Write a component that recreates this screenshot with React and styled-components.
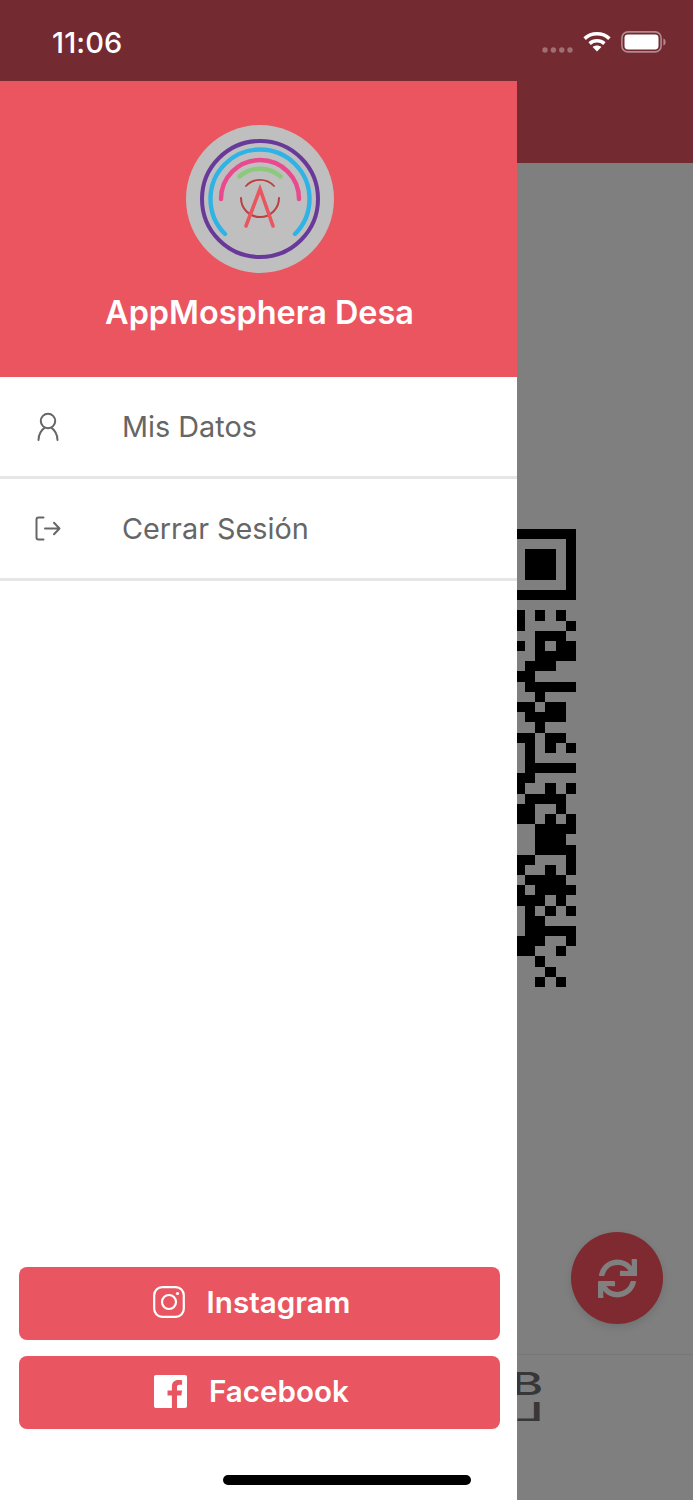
import React from 'react';
import styled, { createGlobalStyle } from 'styled-components';
import { FaSync } from 'react-icons/fa';

const GlobalStyle = createGlobalStyle`
  html, body {
    margin: 0;
    padding: 0;
    background: #fff;
    font-family: Inter, "Liberation Sans", sans-serif;
  }
`

const Screen = styled.div`
  position: relative;
  width: 693px;
  height: 1500px;
  overflow: hidden;
  background: #fff;
`

const PageHeader = styled.div`
  height: 163px;
  background: #e65460;
`

const QrWrap = styled.div`
  display: flex;
  justify-content: center;
  padding-top: 366px;
  height: 1191px;
  box-sizing: border-box;
`

const PageFooter = styled.div`
  border-top: 1px solid #eee;
  height: 146px;
  padding: 13px 150px 0 0;
  box-sizing: border-box;
  display: flex;
  flex-direction: column;
  align-items: flex-end;
  color: #6f6f6f;
`

const CodeChar = styled.span`
  display: block;
  font-size: ${props => props.size}px;
  line-height: ${props => props.lh}px;
  margin-right: ${props => props.inset || 0}px;
  font-weight: 500;
  transform: scaleX(${props => props.stretch || 1});
  transform-origin: right center;
`

const Dim = styled.div`
  position: absolute;
  inset: 0;
  background: rgba(0, 0, 0, 0.5);
`

const Fab = styled.div`
  position: absolute;
  left: 571px;
  top: 1232px;
  width: 92px;
  height: 92px;
  border-radius: 50%;
  background: #7e2a30;
  color: #808080;
  display: flex;
  align-items: center;
  justify-content: center;
  box-shadow: 0 3px 8px rgba(0, 0, 0, 0.12);
`

const StatusBar = styled.div`
  position: absolute;
  top: 0;
  left: 0;
  right: 0;
  height: 81px;
  padding: 0 27px 0 52px;
  box-sizing: border-box;
  display: flex;
  align-items: flex-start;
  justify-content: space-between;
  color: #fff;
`

const Time = styled.span`
  font-size: 29px;
  line-height: 34px;
  font-weight: 500;
  margin-top: 26px;
  letter-spacing: 0.1px;
`

const StatusIcons = styled.div`
  display: flex;
  align-items: flex-start;
  margin-top: 31px;
`

const Drawer = styled.div`
  position: absolute;
  left: 0;
  top: 81px;
  bottom: 0;
  width: 517px;
  background: #fff;
  display: flex;
  flex-direction: column;
`

const DrawerHead = styled.div`
  height: 296px;
  background: #eb5560;
  display: flex;
  flex-direction: column;
  align-items: center;
  padding: 44px 0 0 2px;
  box-sizing: border-box;
`

const Title = styled.div`
  margin-top: 20px;
  color: #fff;
  font-size: 32.4px;
  line-height: 40px;
  font-weight: 600;
`

const MenuRow = styled.div`
  height: 102px;
  box-sizing: border-box;
  border-bottom: 3px solid #e6e6e6;
  display: flex;
  align-items: center;
  padding-left: 33px;
`

const MenuIcon = styled.div`
  width: 90px;
  display: flex;
  align-items: center;
`

const MenuLabel = styled.span`
  font-size: 28.8px;
  color: #666;
  line-height: 34px;
  margin-left: -1px;
`

const Spacer = styled.div`
  flex: 1;
`

const Buttons = styled.div`
  display: flex;
  flex-direction: column;
  gap: 16px;
  padding: 0 17px 71px 19px;
`

const SocialButton = styled.div`
  height: 73px;
  border-radius: 8px;
  background: #e95560;
  color: #fff;
  display: flex;
  align-items: center;
  justify-content: center;
  gap: 22px;
  padding: 0 16px 3px 0;
  box-sizing: border-box;
  font-size: 29.6px;
  font-weight: 600;
`

const HomeBar = styled.div`
  position: absolute;
  left: 223px;
  top: 1475px;
  width: 248px;
  height: 10px;
  border-radius: 5px;
  background: #000;
`

const qrRows = [
  '111111', '000001', '011101', '011101', '011101', '000001', '111111', '000000',
  '101010', '100001', '001110', '101011', '001111', '011100', '110000', '011111',
  '001000', '110110', '011110', '001000', '110110', '010101', '010000', '011111',
  '110000', '100101', '011110', '110010', '110101', '001111', '001110', '001111',
  '110001', '100101', '011110', '101111', '111010', '010101', '011000', '011111',
  '111001', '110010', '001000', '000100', '001010',
]

function QrCode() {
  return (
    <svg width="458" height="458" viewBox="0 0 45 45" shapeRendering="crispEdges">
      {qrRows.map((row, y) =>
        row.split('').map((cell, x) =>
          cell === '1' ? <rect key={x + '-' + y} x={39 + x} y={y} width="1" height="1" fill="#000" /> : null
        )
      )}
    </svg>
  )
}

function Signal() {
  return (
    <svg width="31" height="6" viewBox="0 0 31 6" style={{ marginTop: 16, marginRight: 10 }} fill="#fff" opacity="0.32">
      <circle cx="3" cy="3" r="2.7" />
      <circle cx="11.4" cy="3" r="2.7" />
      <circle cx="19.8" cy="3" r="2.7" />
      <circle cx="28" cy="3" r="2.7" />
    </svg>
  )
}

function Wifi() {
  return (
    <svg width="28" height="21" viewBox="0 0 28 21" fill="none" stroke="#fff" strokeWidth="3.6" strokeLinecap="butt" style={{ marginRight: 10 }}>
      <path d="M1.6 7.6 C8.4 1.2 19.6 1.2 26.4 7.6" />
      <path d="M6.6 12.6 C10.8 8.8 17.2 8.8 21.4 12.6" />
      <path d="M14 20.6 L9.6 16 C12 14 16 14 18.4 16 Z" fill="#fff" stroke="none" />
    </svg>
  )
}

function Battery() {
  return (
    <svg width="45" height="22" viewBox="0 0 45 22">
      <rect x="0.9" y="0.9" width="39.2" height="20" rx="6" fill="none" stroke="#fff" strokeOpacity="0.45" strokeWidth="1.6" />
      <rect x="3.5" y="3.5" width="34" height="15" rx="3.4" fill="#fff" />
      <path d="M42.4 7.4 C44 8 44.6 9.4 44.6 11 C44.6 12.6 44 14 42.4 14.6 Z" fill="#fff" opacity="0.45" />
    </svg>
  )
}

function Logo() {
  return (
    <svg width="148" height="148" viewBox="-74 -74 148 148" fill="none" strokeLinecap="round">
      <circle r="74" fill="#bfbfbf" />
      <circle r="58" stroke="#69399a" strokeWidth="4" />
      <path d="M-35 35 A49.5 49.5 0 1 1 35 35" stroke="#2fb3e6" strokeWidth="4.4" />
      <path d="M-39 0 A39 39 0 0 1 39 0" stroke="#e9498d" strokeWidth="4.4" />
      <path d="M-20.5 -22.5 A31 31 0 0 1 20.5 -22.5" stroke="#8cc97a" strokeWidth="4.4" />
      <path d="M-14 -13 A19 19 0 0 1 14 -13" stroke="#bb3f3f" strokeWidth="1.8" />
      <path d="M-19 -1 A19 19 0 0 0 19 -1" stroke="#bb3f3f" strokeWidth="2" />
      <path d="M-14 27 L0 -10 L13 27" stroke="#e8565f" strokeWidth="3.6" />
    </svg>
  )
}

function UserIcon() {
  return (
    <svg width="30" height="30" viewBox="0 0 30 30" fill="none" stroke="#666" strokeWidth="2" strokeLinecap="round">
      <circle cx="15" cy="9" r="7.2" />
      <path d="M5.5 28 C5.5 22 9 17.4 11.5 15.8 M24.5 28 C24.5 22 21 17.4 18.5 15.8" />
    </svg>
  )
}

function LogoutIcon() {
  return (
    <svg width="26" height="25" viewBox="0 0 26 25" fill="none" stroke="#666" strokeWidth="2" strokeLinecap="round" strokeLinejoin="round" style={{ marginLeft: 2 }}>
      <path d="M8.5 1.5 H3.5 C2.2 1.5 1.5 2.2 1.5 3.5 V21.5 C1.5 22.8 2.2 23.5 3.5 23.5 H8.5" />
      <path d="M10 12.5 H24.5 M19 6.8 L24.5 12.5 L19 18.2" />
    </svg>
  )
}

function InstagramIcon() {
  return (
    <svg width="32" height="32" viewBox="0 0 32 32" fill="none" stroke="#fff" strokeWidth="2.2">
      <rect x="1.2" y="1.2" width="29.6" height="29.6" rx="8" />
      <circle cx="16" cy="16" r="7" />
      <circle cx="24.5" cy="7.5" r="1.6" fill="#fff" stroke="none" />
    </svg>
  )
}

function FacebookIcon() {
  return (
    <svg width="33" height="33" viewBox="0 0 33 33">
      <path
        fillRule="evenodd"
        fill="#fff"
        d="M2 0 H31 C32.2 0 33 .8 33 2 V31 C33 32.2 32.2 33 31 33 H23 V20.4 H27.4 L28 15.4 H23 V12.2 C23 10.7 23.5 9.8 25.4 9.8 H28.1 V5.3 C27.5 5.2 26 5.1 24.3 5.1 C20.5 5.1 17.9 7.4 17.9 11.6 V15.4 H13.5 V20.4 H17.9 V33 H2 C.8 33 0 32.2 0 31 V2 C0 .8 .8 0 2 0 Z"
      />
    </svg>
  )
}

export default function App() {
  return (
    <Screen>
      <GlobalStyle />
      <PageHeader />
      <QrWrap>
        <QrCode />
      </QrWrap>
      <PageFooter>
        <CodeChar size={31} lh={32} stretch={1.6}>B</CodeChar>
        <CodeChar size={25} lh={24} inset={28} stretch={-2}>L</CodeChar>
      </PageFooter>
      <Dim />
      <Fab>
        <FaSync size={39} />
      </Fab>
      <StatusBar>
        <Time>11:06</Time>
        <StatusIcons>
          <Signal />
          <Wifi />
          <Battery />
        </StatusIcons>
      </StatusBar>
      <Drawer>
        <DrawerHead>
          <Logo />
          <Title>AppMosphera Desa</Title>
        </DrawerHead>
        <MenuRow>
          <MenuIcon><UserIcon /></MenuIcon>
          <MenuLabel>Mis Datos</MenuLabel>
        </MenuRow>
        <MenuRow>
          <MenuIcon><LogoutIcon /></MenuIcon>
          <MenuLabel>Cerrar Sesión</MenuLabel>
        </MenuRow>
        <Spacer />
        <Buttons>
          <SocialButton><InstagramIcon />Instagram</SocialButton>
          <SocialButton><FacebookIcon />Facebook</SocialButton>
        </Buttons>
      </Drawer>
      <HomeBar />
    </Screen>
  )
}
